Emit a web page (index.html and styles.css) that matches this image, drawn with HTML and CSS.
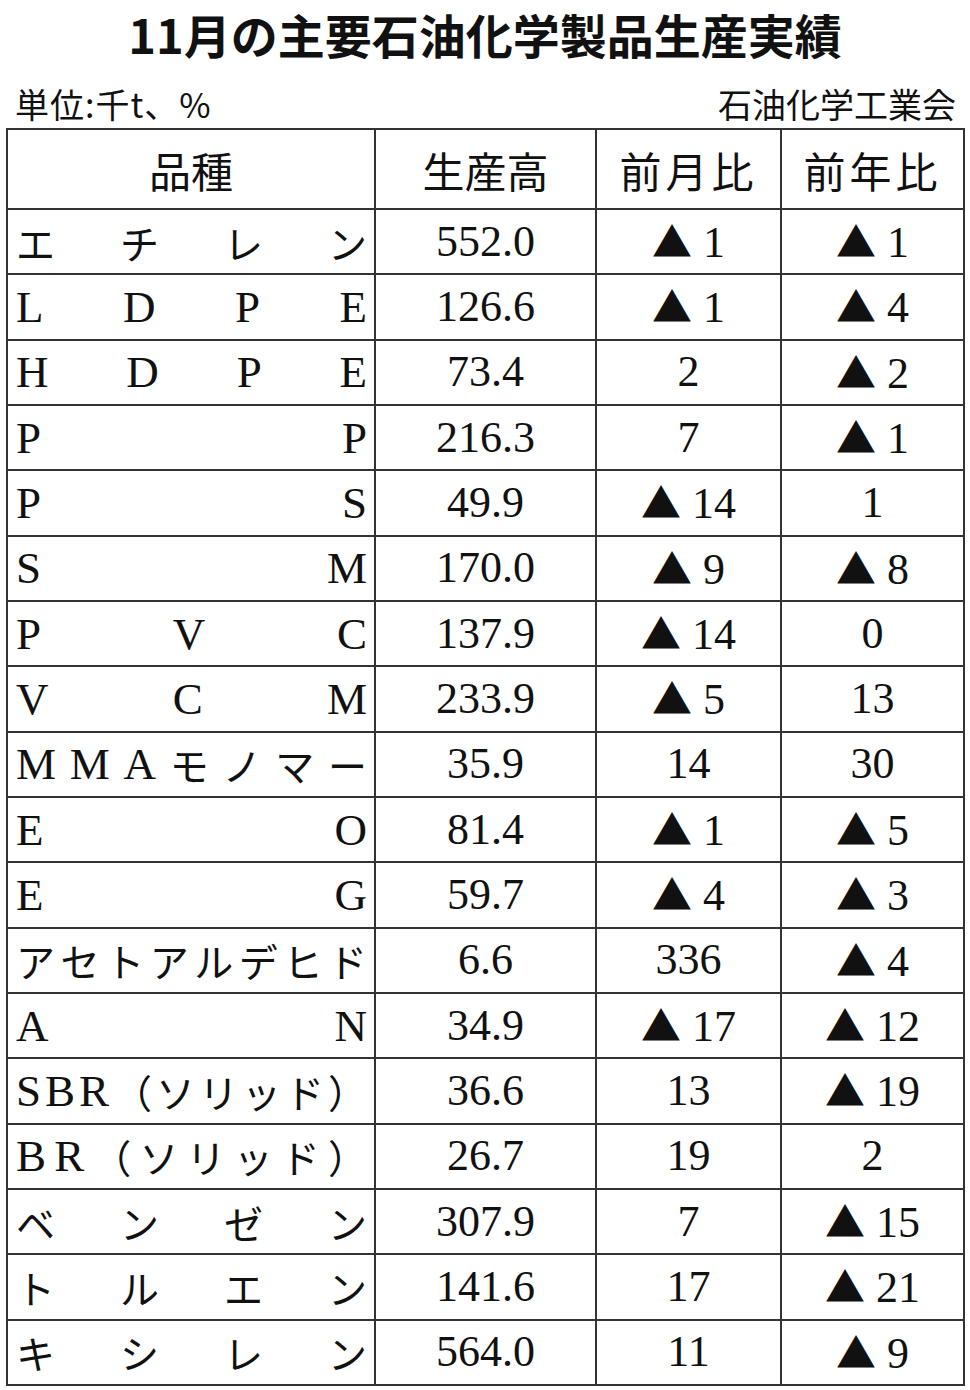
FILE: index.html
```html
<!DOCTYPE html>
<html lang="ja">
<head>
<meta charset="utf-8">
<title>11月の主要石油化学製品生産実績</title>
<link rel="stylesheet" href="styles.css">
</head>
<body>
<div class="page">
  <h1 class="title">11月の主要石油化学製品生産実績</h1>
  <div class="meta">
    <span class="unit">単位:千t、%</span>
    <span class="source">石油化学工業会</span>
  </div>
  <table class="data">
    <colgroup>
      <col class="c1"><col class="c2"><col class="c3"><col class="c4">
    </colgroup>
    <thead>
      <tr>
        <th>品種</th>
        <th>生産高</th>
        <th class="wide">前月比</th>
        <th class="wide">前年比</th>
      </tr>
    </thead>
    <tbody>
      <tr><td class="name"><span class="sp"><i>エ</i><i>チ</i><i>レ</i><i>ン</i></span></td><td class="num">552.0</td><td class="num"><b>▲</b> 1</td><td class="num"><b>▲</b> 1</td></tr>
      <tr><td class="name"><span class="sp lat"><i>L</i><i>D</i><i>P</i><i>E</i></span></td><td class="num">126.6</td><td class="num"><b>▲</b> 1</td><td class="num"><b>▲</b> 4</td></tr>
      <tr><td class="name"><span class="sp lat"><i>H</i><i>D</i><i>P</i><i>E</i></span></td><td class="num">73.4</td><td class="num">2</td><td class="num"><b>▲</b> 2</td></tr>
      <tr><td class="name"><span class="sp lat"><i>P</i><i>P</i></span></td><td class="num">216.3</td><td class="num">7</td><td class="num"><b>▲</b> 1</td></tr>
      <tr><td class="name"><span class="sp lat"><i>P</i><i>S</i></span></td><td class="num">49.9</td><td class="num"><b>▲</b> 14</td><td class="num">1</td></tr>
      <tr><td class="name"><span class="sp lat"><i>S</i><i>M</i></span></td><td class="num">170.0</td><td class="num"><b>▲</b> 9</td><td class="num"><b>▲</b> 8</td></tr>
      <tr><td class="name"><span class="sp lat"><i>P</i><i>V</i><i>C</i></span></td><td class="num">137.9</td><td class="num"><b>▲</b> 14</td><td class="num">0</td></tr>
      <tr><td class="name"><span class="sp lat"><i>V</i><i>C</i><i>M</i></span></td><td class="num">233.9</td><td class="num"><b>▲</b> 5</td><td class="num">13</td></tr>
      <tr><td class="name"><span class="sp mix"><i class="l">M</i><i class="l">M</i><i class="l">A</i><i>モ</i><i>ノ</i><i>マ</i><i>ー</i></span></td><td class="num">35.9</td><td class="num">14</td><td class="num">30</td></tr>
      <tr><td class="name"><span class="sp lat"><i>E</i><i>O</i></span></td><td class="num">81.4</td><td class="num"><b>▲</b> 1</td><td class="num"><b>▲</b> 5</td></tr>
      <tr><td class="name"><span class="sp lat"><i>E</i><i>G</i></span></td><td class="num">59.7</td><td class="num"><b>▲</b> 4</td><td class="num"><b>▲</b> 3</td></tr>
      <tr><td class="name"><span class="sp"><i>ア</i><i>セ</i><i>ト</i><i>ア</i><i>ル</i><i>デ</i><i>ヒ</i><i>ド</i></span></td><td class="num">6.6</td><td class="num">336</td><td class="num"><b>▲</b> 4</td></tr>
      <tr><td class="name"><span class="sp lat"><i>A</i><i>N</i></span></td><td class="num">34.9</td><td class="num"><b>▲</b> 17</td><td class="num"><b>▲</b> 12</td></tr>
      <tr><td class="name"><span class="sp mix"><i class="l">S</i><i class="l">B</i><i class="l">R</i><i>（</i><i>ソ</i><i>リ</i><i>ッ</i><i>ド</i><i>）</i></span></td><td class="num">36.6</td><td class="num">13</td><td class="num"><b>▲</b> 19</td></tr>
      <tr><td class="name"><span class="sp mix"><i class="l">B</i><i class="l">R</i><i>（</i><i>ソ</i><i>リ</i><i>ッ</i><i>ド</i><i>）</i></span></td><td class="num">26.7</td><td class="num">19</td><td class="num">2</td></tr>
      <tr><td class="name"><span class="sp"><i>ベ</i><i>ン</i><i>ゼ</i><i>ン</i></span></td><td class="num">307.9</td><td class="num">7</td><td class="num"><b>▲</b> 15</td></tr>
      <tr><td class="name"><span class="sp"><i>ト</i><i>ル</i><i>エ</i><i>ン</i></span></td><td class="num">141.6</td><td class="num">17</td><td class="num"><b>▲</b> 21</td></tr>
      <tr><td class="name"><span class="sp"><i>キ</i><i>シ</i><i>レ</i><i>ン</i></span></td><td class="num">564.0</td><td class="num">11</td><td class="num"><b>▲</b> 9</td></tr>
    </tbody>
  </table>
</div>
</body>
</html>
```

FILE: styles.css
```css
html, body {
  margin: 0;
  padding: 0;
  background: #ffffff;
}

.page {
  width: 970px;
  height: 1390px;
  color: #111111;
  font-family: "Noto Sans CJK JP", "Noto Sans", sans-serif;
  overflow: hidden;
}

.title {
  margin: 0;
  height: 68px;
  line-height: 68px;
  font-size: 47px;
  font-weight: 700;
  text-align: center;
  letter-spacing: 0;
  color: #111111;
}

.meta {
  display: flex;
  justify-content: space-between;
  align-items: flex-end;
  height: 60px;
  box-sizing: border-box;
  padding: 0 14px 4px 15px;
  font-size: 34px;
  line-height: 40px;
  font-weight: 400;
}

.unit {
  letter-spacing: 1px;
}

.data {
  margin-left: 6px;
  width: 957px;
  border-collapse: collapse;
  table-layout: fixed;
}

.c1 { width: 368px; }
.c2 { width: 221px; }
.c3 { width: 185px; }
.c4 { width: 183px; }

.data th,
.data td {
  border: 2px solid #333333;
  padding: 0;
}

.data th {
  height: 78px;
  font-size: 42px;
  font-weight: 400;
  text-align: center;
  vertical-align: middle;
  letter-spacing: 0;
}

.data th.wide {
  letter-spacing: 4px;
}

.data td {
  height: 63.33px;
  vertical-align: middle;
}

.name {
  padding: 0 7px 0 8px !important;
}

.sp {
  display: flex;
  justify-content: space-between;
  align-items: center;
  font-size: 39px;
  line-height: 50px;
}

.sp i {
  font-style: normal;
}

.sp.lat,
.sp .l {
  font-family: "Liberation Serif", "Times New Roman", serif;
  font-size: 45px;
}

.num {
  text-align: center;
  font-family: "Liberation Serif", "Times New Roman", serif;
  font-size: 44px;
  line-height: 50px;
}

.num b {
  font-family: "Noto Sans CJK JP", sans-serif;
  font-weight: 400;
  font-size: 40px;
}
```
